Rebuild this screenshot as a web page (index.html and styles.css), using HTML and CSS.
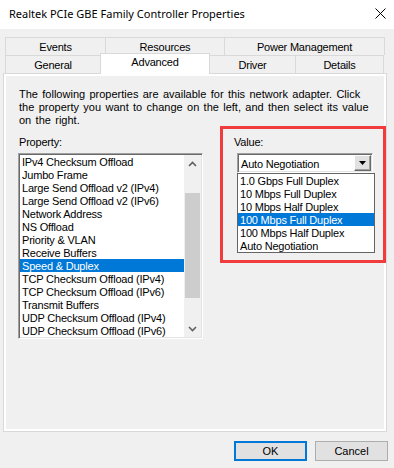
FILE: index.html
```html
<!DOCTYPE html>
<html lang="en">
<head>
  <meta charset="UTF-8">
  <title>Realtek PCIe GBE Family Controller Properties</title>
  <link rel="stylesheet" href="styles.css">
</head>
<body>

  <div class="titlebar">
    <span class="title">Realtek PCIe GBE Family Controller Properties</span>
    <svg class="close" width="11" height="11" viewBox="0 0 11 11">
      <path d="M0.5 0.5 L10.5 10.5 M10.5 0.5 L0.5 10.5" stroke="#000" stroke-width="1" fill="none"/>
    </svg>
  </div>

  <div class="tabs">
    <div class="tabrow">
      <div class="tab events">Events</div>
      <div class="tab resources">Resources</div>
      <div class="tab power">Power Management</div>
    </div>
    <div class="tabrow">
      <div class="tab general">General</div>
      <div class="tab advanced selected">Advanced</div>
      <div class="tab driver">Driver</div>
      <div class="tab details">Details</div>
    </div>
  </div>

  <div class="panel">
    <div class="page">
      <p class="intro">The following properties are available for this network adapter. Click<br>the property you want to change on the left, and then select its value<br>on the right.</p>

      <div class="columns">
        <div class="property">
          <div class="label">Property:</div>
          <div class="listbox">
            <div class="items">
              <div class="item">IPv4 Checksum Offload</div>
              <div class="item">Jumbo Frame</div>
              <div class="item">Large Send Offload v2 (IPv4)</div>
              <div class="item">Large Send Offload v2 (IPv6)</div>
              <div class="item">Network Address</div>
              <div class="item">NS Offload</div>
              <div class="item">Priority &amp; VLAN</div>
              <div class="item">Receive Buffers</div>
              <div class="item active">Speed &amp; Duplex</div>
              <div class="item">TCP Checksum Offload (IPv4)</div>
              <div class="item">TCP Checksum Offload (IPv6)</div>
              <div class="item">Transmit Buffers</div>
              <div class="item">UDP Checksum Offload (IPv4)</div>
              <div class="item">UDP Checksum Offload (IPv6)</div>
            </div>
            <div class="scrollbar">
              <div class="arrow">
                <svg width="9" height="6" viewBox="0 0 9 6"><path d="M1 5 L4.5 1.5 L8 5" stroke="#606060" stroke-width="1.6" fill="none"/></svg>
              </div>
              <div class="track"><div class="thumb"></div></div>
              <div class="arrow">
                <svg width="9" height="6" viewBox="0 0 9 6"><path d="M1 1 L4.5 4.5 L8 1" stroke="#606060" stroke-width="1.6" fill="none"/></svg>
              </div>
            </div>
          </div>
        </div>

        <div class="value">
          <div class="label">Value:</div>
          <div class="combo">
            <span class="combo-text">Auto Negotiation</span>
            <div class="combo-btn">
              <svg width="7" height="4" viewBox="0 0 7 4"><polygon points="0,0 7,0 3.5,4" fill="#000"/></svg>
            </div>
            <div class="dropdown">
              <div class="option">1.0 Gbps Full Duplex</div>
              <div class="option">10 Mbps Full Duplex</div>
              <div class="option">10 Mbps Half Duplex</div>
              <div class="option active">100 Mbps Full Duplex</div>
              <div class="option">100 Mbps Half Duplex</div>
              <div class="option">Auto Negotiation</div>
            </div>
          </div>
          <!-- red annotation frame -->
          <div class="marker"></div>
        </div>
      </div>
    </div>
  </div>

  <div class="buttons">
    <button class="btn default">OK</button>
    <button class="btn">Cancel</button>
  </div>

</body>
</html>
```

FILE: styles.css
```css
body {
  margin: 0;
  padding: 0;
  width: 394px;
  height: 468px;
  overflow: hidden;
  background: #f0f0f0;
  font-family: "Liberation Sans", Arial, sans-serif;
  font-size: 11px;
  letter-spacing: -0.2px;
  color: #000;
}

/* Title bar */
.titlebar {
  height: 29px;
  background: #fff;
  display: flex;
  align-items: center;
  justify-content: space-between;
  padding: 0 8px 0 9px;
}

.title {
  font-family: "Noto Sans", sans-serif;
  font-size: 11px;
  letter-spacing: 0;
  margin-top: -3px;
}

.close {
  margin-top: -2px;
}

/* Tabs */
.tabs {
  margin: 8px 0 0 5px;
  width: 380px;
}

.tabrow {
  display: flex;
  height: 18px;
}

.tab {
  box-sizing: border-box;
  height: 18px;
  border-top: 1px solid #d9d9d9;
  border-left: 1px solid #d9d9d9;
  background: #f0f0f0;
  text-align: center;
  line-height: 18px;
}

.tab:last-child {
  border-right: 1px solid #d9d9d9;
}

.events { width: 100px; }
.resources { width: 119px; }
.power { width: 161px; }
.general { width: 95px; }
.advanced { width: 110px; }
.driver { width: 86px; }
.details { width: 89px; }

.tab.selected {
  background: #fff;
  height: 21px;
  margin-top: -2px;
  border-right: 1px solid #d9d9d9;
  margin-right: -1px;
  line-height: 17px;
  position: relative;
  z-index: 2;
}

/* Panel */
.panel {
  box-sizing: border-box;
  margin-left: 3px;
  width: 384px;
  height: 359px;
  border: 1px solid #d9d9d9;
  background: #fff;
  padding: 2px;
}

.page {
  height: 100%;
  background: #f0f0f0;
  padding: 12px 13px 0 13px;
  box-sizing: border-box;
}

.intro {
  margin: 0;
  line-height: 13px;
  letter-spacing: 0;
  word-spacing: 1.3px;
  white-space: nowrap;
}

.columns {
  display: flex;
  margin-top: 9px;
}

.label {
  line-height: 13px;
  margin-bottom: 4px;
}

.property {
  width: 184px;
}

.listbox {
  display: flex;
  box-sizing: border-box;
  width: 185px;
  height: 186px;
  margin-left: -1px;
  border: 1px solid;
  border-color: #a0a0a0 #fff #fff #a0a0a0;
  box-shadow: inset 1px 1px #696969, inset -1px -1px #e3e3e3;
  background: #fff;
  padding: 1px;
}

.items {
  flex: 1;
}

.item,
.option {
  height: 12px;
  padding-top: 1px;
  line-height: 13px;
  padding-left: 2px;
  white-space: nowrap;
}

.item.active,
.option.active {
  background: #0078d7;
  color: #fff;
}

.scrollbar {
  width: 17px;
  display: flex;
  flex-direction: column;
  background: #f0f0f0;
}

.arrow {
  height: 17px;
  display: flex;
  align-items: center;
  justify-content: center;
}

.track {
  flex: 1;
  padding: 21px 1px 0 1px;
}

.thumb {
  height: 105px;
  background: #cdcdcd;
}

/* Value column */
.value {
  position: relative;
  margin-left: 31px;
}

.combo {
  position: relative;
  box-sizing: border-box;
  width: 136px;
  height: 20px;
  margin-left: 3px;
  display: flex;
  align-items: center;
  justify-content: space-between;
  border: 1px solid;
  border-color: #a0a0a0 #fff #fff #a0a0a0;
  box-shadow: inset 1px 1px #696969, inset -1px -1px #e3e3e3;
  background: #fff;
  padding: 1px;
}

.combo-text {
  padding: 1px 0 0 2px;
}

.combo-btn {
  box-sizing: border-box;
  width: 17px;
  height: 16px;
  display: flex;
  align-items: center;
  justify-content: center;
  background: #e1e1e1;
  border: 1px solid;
  border-color: #fff #696969 #696969 #fff;
  box-shadow: inset -1px -1px #a0a0a0;
}

.dropdown {
  position: absolute;
  top: 19px;
  left: -1px;
  box-sizing: border-box;
  width: 138px;
  border: 1px solid #646464;
  background: #fff;
  z-index: 3;
}

.marker {
  position: absolute;
  left: -14px;
  top: -10px;
  width: 166px;
  height: 137px;
  box-sizing: border-box;
  border: 3px solid #f03c3c;
  z-index: 4;
}

/* Bottom buttons */
.buttons {
  display: flex;
  justify-content: flex-end;
  gap: 8px;
  padding-right: 6px;
  margin-top: 9px;
}

.btn {
  box-sizing: border-box;
  width: 73px;
  height: 20px;
  padding: 0;
  background: #e1e1e1;
  border: 1px solid #adadad;
  font-family: "Liberation Sans", Arial, sans-serif;
  font-size: 11px;
  color: #000;
}

.btn.default {
  border: 2px solid #0078d7;
}
```
